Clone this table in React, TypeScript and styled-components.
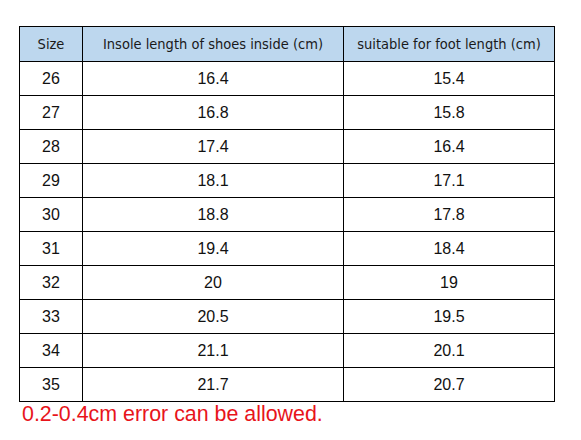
import React from 'react';
import styled, { createGlobalStyle } from 'styled-components';

const GlobalStyle = createGlobalStyle`
  html, body {
    margin: 0;
    padding: 0;
    background: #fff;
  }
`;

const Page = styled.div`
  width: 581px;
  height: 440px;
  box-sizing: border-box;
  padding: 26px 0 0 19px;
  background: #fff;
`;

const Table = styled.table`
  border-collapse: collapse;
  table-layout: fixed;
  width: 536px;
`;

const HeadCell = styled.th<{ w?: number }>`
  ${p => (p.w ? `width: ${p.w}px;` : '')}
  height: 34px;
  padding: 0;
  border: 1px solid #000;
  background: #bdd7ee;
  color: #1a1a1a;
  font-family: "DejaVu Sans Condensed", "DejaVu Sans", sans-serif;
  font-weight: normal;
  font-size: 14.5px;
  text-align: center;
`;

const Cell = styled.td`
  height: 33px;
  padding: 0;
  border: 1px solid #000;
  color: #111;
  font-family: "Liberation Sans", Arial, sans-serif;
  font-size: 16px;
  text-align: center;
`;

const Note = styled.div`
  margin: 0 0 0 3px;
  color: #e8141b;
  font-family: "Liberation Sans", Arial, sans-serif;
  font-size: 21.4px;
`;

const rows: [number, string, string][] = [
  [26, '16.4', '15.4'],
  [27, '16.8', '15.8'],
  [28, '17.4', '16.4'],
  [29, '18.1', '17.1'],
  [30, '18.8', '17.8'],
  [31, '19.4', '18.4'],
  [32, '20', '19'],
  [33, '20.5', '19.5'],
  [34, '21.1', '20.1'],
  [35, '21.7', '20.7'],
];

export default function App() {
  return (
    <Page>
      <GlobalStyle />
      <Table>
        <thead>
          <tr>
            <HeadCell w={62}>Size</HeadCell>
            <HeadCell w={260}>Insole length of shoes inside (cm)</HeadCell>
            <HeadCell>suitable for foot length (cm)</HeadCell>
          </tr>
        </thead>
        <tbody>
          {rows.map(([size, insole, foot]) => (
            <tr key={size}>
              <Cell>{size}</Cell>
              <Cell>{insole}</Cell>
              <Cell>{foot}</Cell>
            </tr>
          ))}
        </tbody>
      </Table>
      <Note>0.2-0.4cm error can be allowed.</Note>
    </Page>
  );
}
